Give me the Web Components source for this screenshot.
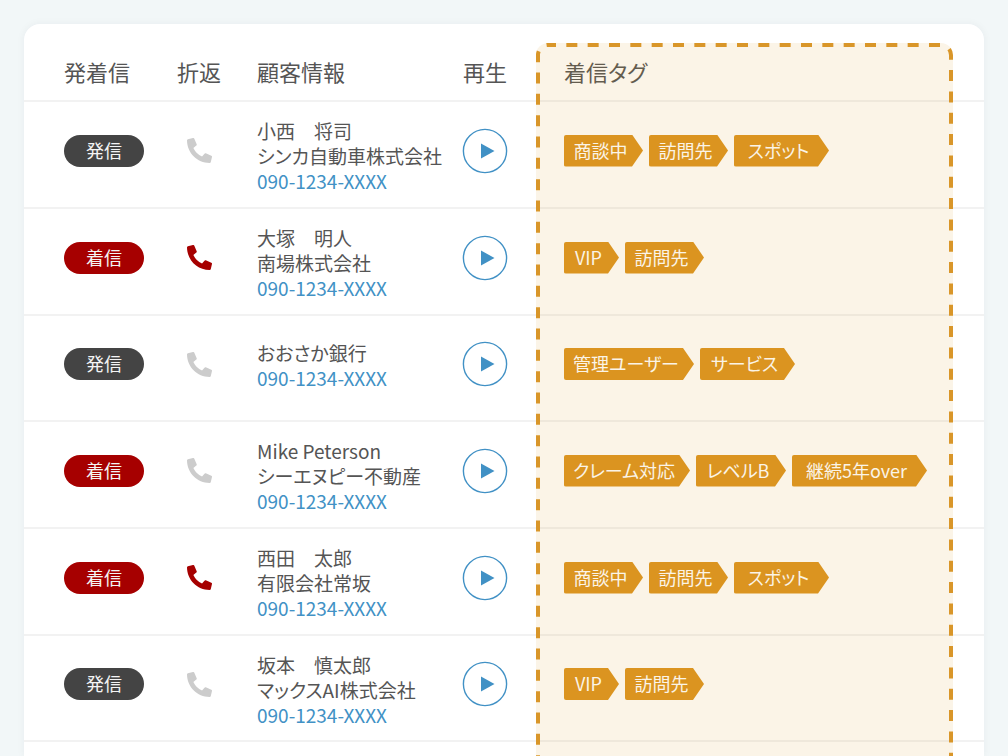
<!DOCTYPE html>
<html lang="ja">
<head>
<meta charset="utf-8">
<title>着信履歴</title>
<style>
body {
   margin: 0;
   background-color: #f2f7f8;
   color: #555;
   font-family: "Noto Sans CJK JP", sans-serif;
   font-feature-settings: "palt";
}
</style>
</head>
<body>
<call-history></call-history>

<script>
class callBadge extends HTMLElement {
   constructor() {
      super();
      this.attachShadow({ mode: "open" }).innerHTML = `
<style>
:host {
   display: block;
   width: 80px;
   padding-bottom: 2px;
   border-radius: 16px;
   background-color: #444;
   color: #f4f4f4;
   font-size: 18px;
   line-height: 30px;
   text-align: center;
}
:host([type="in"]) {
   background-color: #a60000;
}
</style>
<slot></slot>`;
   }
}
customElements.define("call-badge", callBadge);

class callBack extends HTMLElement {
   constructor() {
      super();
      this.attachShadow({ mode: "open" }).innerHTML = `
<style>
:host {
   display: block;
   color: #ccc;
}
:host([needed]) {
   color: #a60000;
}
svg {
   display: block;
   width: 25px;
   height: 25px;
   margin: 0 auto;
   fill: currentColor;
}
</style>
<svg viewBox="0 0 512 512" aria-hidden="true"><path d="M497.39 361.8l-112-48a24 24 0 0 0-28 6.9l-49.6 60.6A370.66 370.66 0 0 1 130.6 204.11l60.6-49.6a23.94 23.94 0 0 0 6.9-28l-48-112A24.16 24.16 0 0 0 122.6.61l-104 24A24 24 0 0 0 0 48c0 256.5 207.9 464 464 464a24 24 0 0 0 23.4-18.6l24-104a24.29 24.29 0 0 0-14.01-27.6z"/></svg>`;
   }
}
customElements.define("call-back", callBack);

class playButton extends HTMLElement {
   constructor() {
      super();
      this.attachShadow({ mode: "open" }).innerHTML = `
<style>
:host {
   display: block;
}
button {
   appearance: none;
   display: block;
   margin: 0 auto;
   padding: 0;
   border: none;
   background: none;
   color: #4191c5;
   cursor: pointer;
}
svg {
   display: block;
   width: 46px;
   height: 46px;
}
</style>
<button type="button" aria-label="再生">
   <svg viewBox="0 0 46 46">
      <circle cx="23" cy="23" r="21.6" fill="none" stroke="currentColor" stroke-width="1.4"/>
      <path d="M19 15.5v15l13.5-7.5z" fill="currentColor"/>
   </svg>
</button>`;
   }
}
customElements.define("play-button", playButton);

class callTag extends HTMLElement {
   constructor() {
      super();
      this.attachShadow({ mode: "open" }).innerHTML = `
<style>
:host {
   display: block;
   box-sizing: border-box;
   width: var(--tag-width, 79px);
   padding: 0 6px 2px 0;
   border-radius: 2px;
   background-color: #db9420;
   clip-path: polygon(0 0, calc(100% - 11px) 0, 100% 50%, calc(100% - 11px) 100%, 0 100%);
   color: #fff;
   font-size: 18px;
   line-height: 30px;
   text-align: center;
   white-space: nowrap;
}
</style>
<slot></slot>`;
   }
}
customElements.define("call-tag", callTag);

/* dashed frame laid over the tag column */
class focusFrame extends HTMLElement {
   constructor() {
      super();
      this.attachShadow({ mode: "open" }).innerHTML = `
<style>
:host {
   display: block;
   pointer-events: none;
}
svg {
   display: block;
   width: 100%;
   height: 100%;
}
.fill {
   width: 100%;
   height: 100%;
   fill: rgba(221, 151, 33, .11);
}
.line {
   width: calc(100% - 4px);
   height: calc(100% - 4px);
   fill: none;
   stroke: #d99629;
   stroke-width: 4px;
   stroke-dasharray: 11 10.333;
   stroke-dashoffset: 3;
}
</style>
<svg aria-hidden="true">
   <rect class="fill" rx="12"/>
   <rect class="line" x="2" y="2" rx="10"/>
</svg>`;
   }
}
customElements.define("focus-frame", focusFrame);

const calls = [
   { type: "out", back: false, name: "小西　将司", company: "シンカ自動車株式会社", tags: [["商談中", 79], ["訪問先", 79], ["スポット", 95]] },
   { type: "in", back: true, name: "大塚　明人", company: "南場株式会社", tags: [["VIP", 55], ["訪問先", 79]] },
   { type: "out", back: false, name: "おおさか銀行", company: "", tags: [["管理ユーザー", 130], ["サービス", 95]] },
   { type: "in", back: false, name: "Mike Peterson", company: "シーエヌピー不動産", tags: [["クレーム対応", 126], ["レベルB", 90], ["継続5年over", 135]] },
   { type: "in", back: true, name: "西田　太郎", company: "有限会社常坂", tags: [["商談中", 79], ["訪問先", 79], ["スポット", 95]] },
   { type: "out", back: false, name: "坂本　慎太郎", company: "マックスAI株式会社", tags: [["VIP", 55], ["訪問先", 79]] },
];

class callHistory extends HTMLElement {
   constructor() {
      super();
      this.attachShadow({ mode: "open" }).innerHTML = `
<style>
:host {
   display: block;
   box-sizing: border-box;
   height: 100vh;
   padding: 24px 24px 0;
   overflow: hidden;
}
.card {
   position: relative;
   height: 100%;
   border-radius: 16px 16px 0 0;
   background-color: #fff;
   box-shadow: 0 0 8px rgba(0, 40, 50, .05);
}
table {
   width: 100%;
   border-spacing: 0;
   table-layout: fixed;
}
th {
   height: 59px;
   padding: 17px 0 0;
   font-size: 22px;
   font-weight: 400;
   line-height: 32px;
   text-align: left;
}
td {
   box-sizing: border-box;
   height: 107px;
   padding: 0 0 8px;
   border-top: 2px solid #f2f2f2;
}
tr:nth-child(3n) td {
   height: 106px;
}
tbody tr:last-child td {
   border-bottom: 2px solid #f2f2f2;
   height: 108px;
}
.type {
   width: 95px;
   padding-left: 40px;
}
.back, .play {
   width: 80px;
   text-align: center;
}
.customer {
   width: 188px;
   padding-left: 18px;
   white-space: nowrap;
}
.tag {
   padding-left: 39px;
}
td.customer {
   padding-top: 2px;
   padding-bottom: 0;
   font-size: 19px;
   line-height: 25px;
}
td.person {
   padding-top: 0;
   padding-bottom: 6px;
}
td.type, td.customer {
   width: auto;
}
a {
   color: #4191c5;
   text-decoration: none;
}
.tags {
   display: flex;
   gap: 6px;
}
focus-frame {
   position: absolute;
   top: 19px;
   right: 31px;
   bottom: -102px;
   left: 512px;
}
</style>
<div class="card">
   <table>
      <thead>
         <tr>
            <th class="type">発着信</th>
            <th class="back">折返</th>
            <th class="customer">顧客情報</th>
            <th class="play">再生</th>
            <th class="tag">着信タグ</th>
         </tr>
      </thead>
      <tbody></tbody>
   </table>
   <focus-frame></focus-frame>
</div>`;
      this.shadowRoot.querySelector("tbody").innerHTML = calls.map(call => this.row(call)).join("");
   }

   row(call) {
      const tags = call.tags.map(([text, width]) => `<call-tag style="--tag-width: ${width}px">${text}</call-tag>`).join("");
      return `
<tr>
   <td class="type"><call-badge type="${call.type}">${call.type === "in" ? "着信" : "発信"}</call-badge></td>
   <td class="back"><call-back ${call.back ? "needed" : ""}></call-back></td>
   <td class="customer ${call.company ? "" : "person"}">
      <div>${call.name}</div>
      ${call.company ? `<div>${call.company}</div>` : ""}
      <div><a href="tel:090-1234-XXXX">090-1234-XXXX</a></div>
   </td>
   <td class="play"><play-button></play-button></td>
   <td class="tag"><div class="tags">${tags}</div></td>
</tr>`;
   }
}
customElements.define("call-history", callHistory);
</script>
</body>
</html>
